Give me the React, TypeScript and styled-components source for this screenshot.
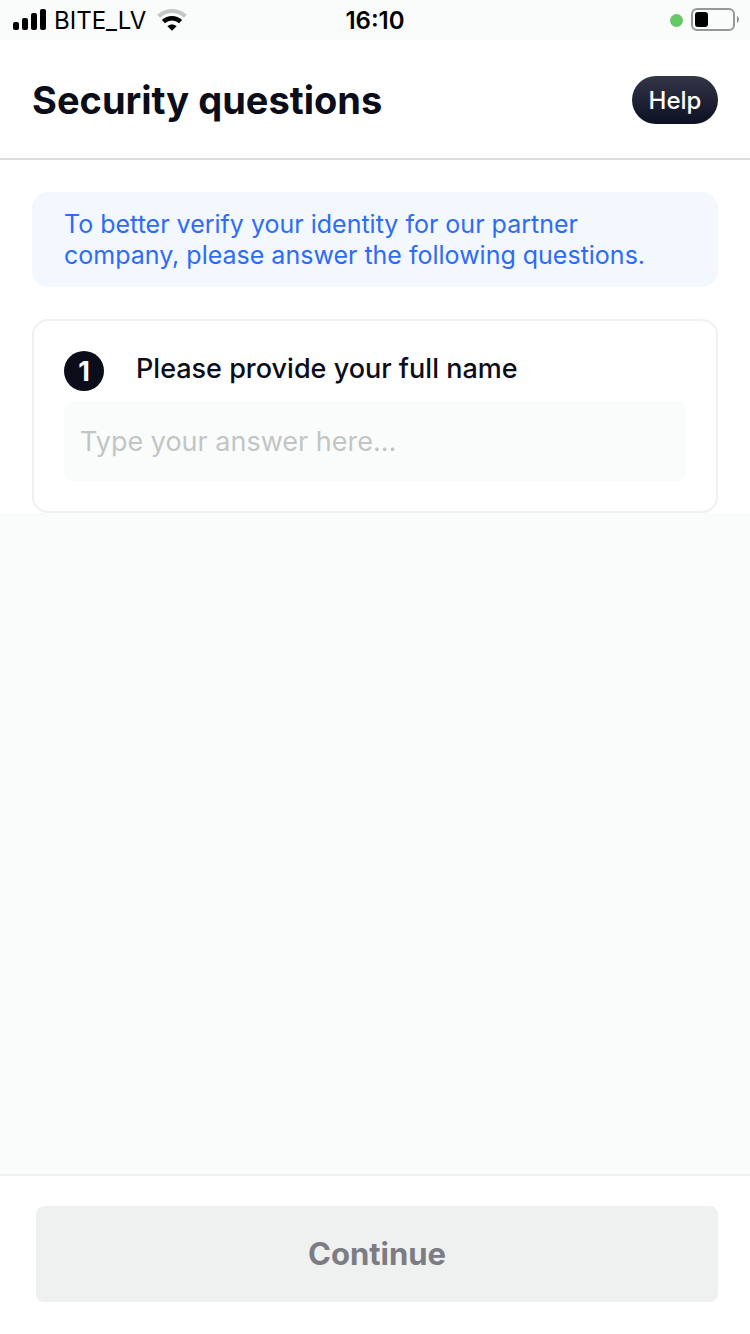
import React, { useState } from "react";
import styled, { createGlobalStyle } from "styled-components";

const GlobalStyle = createGlobalStyle`
  *, *::before, *::after { box-sizing: border-box; }
  body {
    margin: 0;
    background: #fafcfb;
    color: #0b0d1a;
    font-family: Inter, "Liberation Sans", sans-serif;
  }
  button, input { font: inherit; }
`;

const Screen = styled.div`
  min-height: 100vh;
  display: flex;
  flex-direction: column;
  background: #fafcfb;
`;

const StatusBar = styled.div`
  display: grid;
  grid-template-columns: 1fr auto 1fr;
  align-items: center;
  height: 40px;
  padding: 0 11px;
  color: #000;
  font-size: 24px;
  line-height: 30px;
`;

const StatusGroup = styled.div<{ $end?: boolean }>`
  display: flex;
  align-items: center;
  justify-content: ${(p) => (p.$end ? "flex-end" : "flex-start")};
  gap: 8px;
  padding-left: 2px;
`;

const Carrier = styled.span`
  padding-top: 2px;
`;

const Clock = styled.time`
  padding-top: 2px;
  font-weight: 600;
`;

const RecordingDot = styled.span`
  width: 13px;
  height: 13px;
  border-radius: 50%;
  background: #66c766;
`;

const Header = styled.header`
  display: flex;
  align-items: center;
  justify-content: space-between;
  height: 120px;
  padding: 2px 32px 0;
  background: #fff;
  border-bottom: 2px solid #dcdcdc;
`;

const Title = styled.h1`
  margin: 0;
  font-size: 38px;
  font-weight: 700;
  line-height: 48px;
`;

const HelpButton = styled.button`
  min-width: 86px;
  height: 48px;
  padding: 0 16px;
  border: 0;
  border-radius: 24px;
  background: linear-gradient(#333647, #0c1024);
  color: #fff;
  font-size: 24px;
  font-weight: 500;
  cursor: pointer;
`;

const Content = styled.main`
  display: flex;
  flex-direction: column;
  gap: 32px;
  padding: 32px 32px 0;
  background: #fff;
`;

const Notice = styled.p`
  margin: 0;
  padding: 17px 32px 16px;
  border-radius: 16px;
  background: #f3f8ff;
  color: #2e6bf6;
  font-size: 25px;
  line-height: 31px;
`;

const QuestionCard = styled.section`
  display: flex;
  flex-direction: column;
  gap: 10px;
  padding: 30px;
  border: 2px solid #f0f0f0;
  border-radius: 16px;
`;

const QuestionHead = styled.div`
  display: flex;
  gap: 32px;
`;

const QuestionNumber = styled.span`
  display: flex;
  flex: none;
  align-items: center;
  justify-content: center;
  width: 40px;
  height: 40px;
  border-radius: 50%;
  background: #0b0d1a;
  color: #fff;
  font-size: 27px;
  font-weight: 700;
`;

const QuestionLabel = styled.label`
  font-size: 27px;
  font-weight: 500;
  line-height: 35px;
`;

const AnswerInput = styled.input`
  width: 100%;
  height: 80px;
  padding: 0 16px;
  border: 0;
  border-radius: 8px;
  background: #fafcfb;
  color: #0b0d1a;
  font-size: 27px;

  &::placeholder {
    color: #c3c5c4;
    opacity: 1;
  }
`;

const Footer = styled.footer`
  margin-top: auto;
  padding: 30px 32px 32px 36px;
  background: #fff;
  border-top: 2px solid #eff1f0;
`;

const ContinueButton = styled.button`
  display: block;
  width: 100%;
  height: 96px;
  padding: 0 0 2px;
  border: 0;
  border-radius: 8px;
  background: #eff1f0;
  color: #7c7d84;
  font-size: 31px;
  font-weight: 700;
`;

const SignalIcon = () => (
  <svg width="33" height="22" viewBox="0 0 33 22" aria-hidden="true">
    <rect x="0" y="13" width="6" height="8" rx="2" />
    <rect x="9" y="9" width="6" height="12" rx="2" />
    <rect x="18" y="4" width="6" height="17" rx="2" />
    <rect x="27" y="0" width="6" height="21" rx="2" />
  </svg>
);

const WifiIcon = () => (
  <svg width="34" height="22" viewBox="-2 0 34 22" aria-hidden="true">
    <path d="M2.7 7.3C10 .2 22 .2 29.3 7.3" fill="none" stroke="#c4c5c5" strokeWidth="4" />
    <path d="M7.4 12.6C12.2 8.2 19.8 8.2 24.6 12.6" fill="none" stroke="#000" strokeWidth="4.4" />
    <path d="M11.4 17.2C14 15 18 15 20.6 17.2L16 21.8Z" />
  </svg>
);

const BatteryIcon = () => (
  <svg width="48" height="24" viewBox="0 0 48 24" aria-hidden="true">
    <rect x="1" y="1" width="42" height="21" rx="5" fill="none" stroke="#969897" strokeWidth="2" />
    <rect x="4" y="4" width="13" height="15" rx="3" />
    <path d="M46 8C48.4 9.2 48.4 13.8 46 15Z" fill="#858786" />
  </svg>
);

export default function App() {
  const [answer, setAnswer] = useState("");

  return (
    <>
      <GlobalStyle />
      <Screen>
        <StatusBar>
          <StatusGroup>
            <SignalIcon />
            <Carrier>BITE_LV</Carrier>
            <WifiIcon />
          </StatusGroup>
          <Clock>16:10</Clock>
          <StatusGroup $end>
            <RecordingDot />
            <BatteryIcon />
          </StatusGroup>
        </StatusBar>
        <Header>
          <Title>Security questions</Title>
          <HelpButton type="button">Help</HelpButton>
        </Header>
        <Content>
          <Notice>
            To better verify your identity for our partner company, please answer the following
            questions.
          </Notice>
          <QuestionCard>
            <QuestionHead>
              <QuestionNumber>1</QuestionNumber>
              <QuestionLabel htmlFor="full-name">Please provide your full name</QuestionLabel>
            </QuestionHead>
            <AnswerInput
              id="full-name"
              type="text"
              placeholder="Type your answer here..."
              value={answer}
              onChange={(e) => setAnswer(e.target.value)}
            />
          </QuestionCard>
        </Content>
        <Footer>
          <ContinueButton type="button" disabled={answer.trim() === ""}>
            Continue
          </ContinueButton>
        </Footer>
      </Screen>
    </>
  );
}
